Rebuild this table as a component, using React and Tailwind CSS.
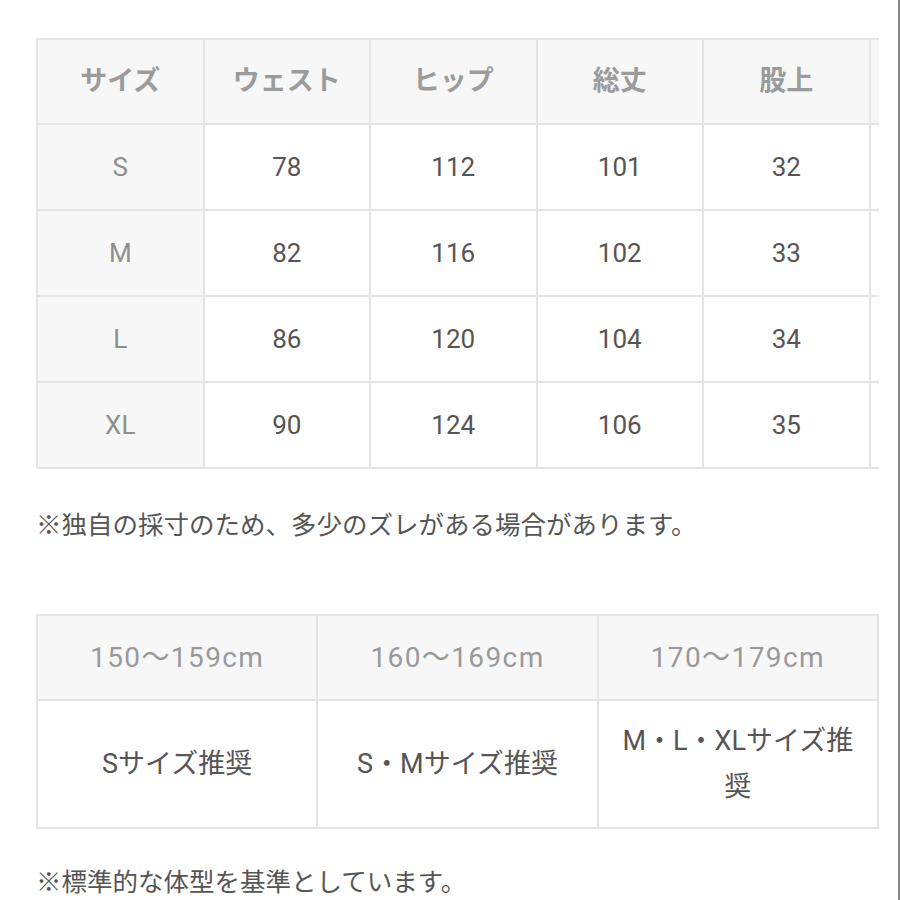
import React from "react";

const headers = ["サイズ", "ウェスト", "ヒップ", "総丈", "股上", ""];
const rows = [
  ["S", "78", "112", "101", "32", ""],
  ["M", "82", "116", "102", "33", ""],
  ["L", "86", "120", "104", "34", ""],
  ["XL", "90", "124", "106", "35", ""],
];

const heights = ["150〜159cm", "160〜169cm", "170〜179cm"];
const recommend = ["Sサイズ推奨", "S・Mサイズ推奨", "M・L・XLサイズ推奨"];

const font = { fontFamily: "Roboto, 'Noto Sans CJK JP', sans-serif" };

const App = () => {
  return (
    <div
      className="w-[900px] h-[900px] bg-white border-r-2 border-[#8a8a8a] overflow-hidden"
      style={font}
    >
      <div className="pl-[36px] pt-[38px]">
        {/* size table, scrolls sideways on the real page */}
        <div className="w-[843px] overflow-hidden">
          <table className="border-collapse table-fixed w-[1000px]">
            <thead>
              <tr className="h-[85px]">
                {headers.map((h, i) => (
                  <th
                    key={i}
                    className="w-[166.5px] border-2 border-[#e4e4e4] bg-[#f7f7f7] text-[27px] font-bold text-[#9b9b9b] text-center"
                  >
                    {h}
                  </th>
                ))}
              </tr>
            </thead>
            <tbody>
              {rows.map((row, r) => (
                <tr key={r} className="h-[86px]">
                  {row.map((cell, c) => (
                    <td
                      key={c}
                      className={
                        c === 0
                          ? "border-2 border-[#e4e4e4] bg-[#f7f7f7] text-[26px] text-[#8e8e8e] text-center"
                          : "border-2 border-[#e4e4e4] bg-white text-[26px] text-[#555555] text-center"
                      }
                    >
                      {cell}
                    </td>
                  ))}
                </tr>
              ))}
            </tbody>
          </table>
        </div>

        <p className="mt-[39px] text-[25.5px] text-[#555555] leading-[34px]">
          ※独自の採寸のため、多少のズレがある場合があります。
        </p>

        <table className="mt-[72px] border-collapse table-fixed w-[843px]">
          <thead>
            <tr className="h-[85px]">
              {heights.map((h, i) => (
                <th
                  key={i}
                  className="border-2 border-[#e4e4e4] bg-[#f7f7f7] text-[28px] font-normal tracking-[0.05em] text-[#999999] text-center"
                >
                  {h}
                </th>
              ))}
            </tr>
          </thead>
          <tbody>
            <tr className="h-[128px]">
              {recommend.map((t, i) => (
                <td
                  key={i}
                  className="border-2 border-[#e4e4e4] bg-white px-[18px] py-[17px] text-[27px] leading-[46px] text-[#555555] text-center"
                >
                  {t}
                </td>
              ))}
            </tr>
          </tbody>
        </table>

        <p className="mt-[36px] text-[25.5px] text-[#555555] leading-[34px]">
          ※標準的な体型を基準としています。
        </p>
      </div>
    </div>
  );
};

export default App;
